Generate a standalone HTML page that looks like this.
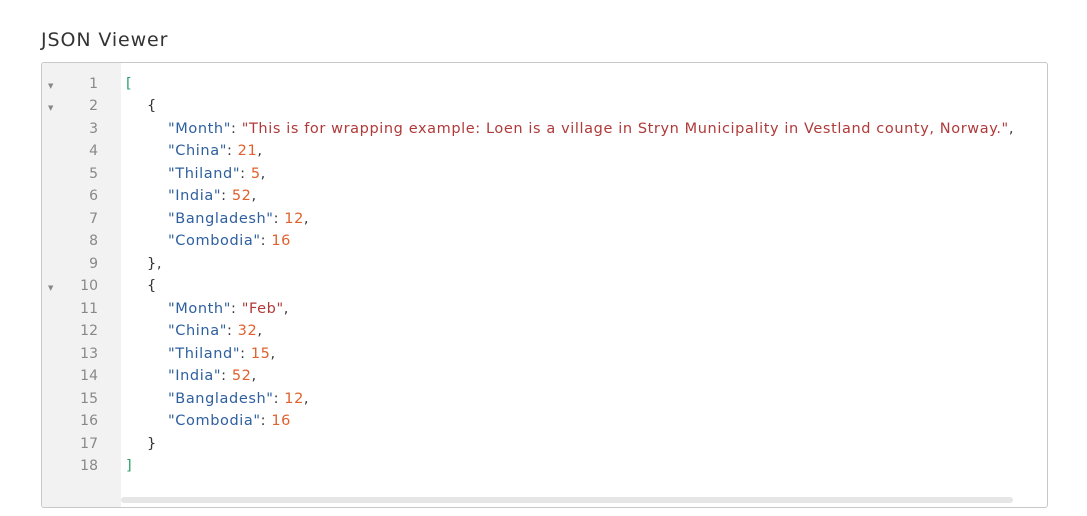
<!DOCTYPE html>
<html><head><style>
body{margin:0;background:#fff;font-family:"DejaVu Sans","Liberation Sans",sans-serif;}
h1{position:absolute;left:41px;top:29px;margin:0;font-size:19px;font-weight:normal;color:#333;letter-spacing:0.9px}
.box{position:absolute;left:41px;top:62px;width:1005px;height:444px;border:1px solid #c8c8c8;border-radius:3px;overflow:hidden}
.gut{position:absolute;left:0;top:0;width:79px;height:100%;background:#f2f2f2}
.ln{position:absolute;left:0;width:56px;text-align:right;color:#888;font-size:14px}
.ar{position:absolute;left:6px;font-size:7px;color:#888}
.cd{position:absolute;left:84px;font-size:14.5px;color:#333;white-space:pre;letter-spacing:0.6px}
.k{color:#2e5f9e}.s{color:#b03a3a}.n{color:#e0612e}.b{color:#2aa06a}
.sb{position:absolute;left:79px;top:434px;width:892px;height:6px;background:#e6e6e6;border-radius:3px}
</style></head><body>
<h1>JSON Viewer</h1>
<div class="box">
<div class="gut"></div>
<div id="c"></div>
<div class="sb"></div>
</div>
<script>
var L=[
['<span class="b">[</span>',0,1],
['{',1,1],
['<span class="k">"Month"</span>: <span class="s">"This is for wrapping example: Loen is a village in Stryn Municipality in Vestland county, Norway."</span>,',2],
['<span class="k">"China"</span>: <span class="n">21</span>,',2],
['<span class="k">"Thiland"</span>: <span class="n">5</span>,',2],
['<span class="k">"India"</span>: <span class="n">52</span>,',2],
['<span class="k">"Bangladesh"</span>: <span class="n">12</span>,',2],
['<span class="k">"Combodia"</span>: <span class="n">16</span>',2],
['},',1],
['{',1,1],
['<span class="k">"Month"</span>: <span class="s">"Feb"</span>,',2],
['<span class="k">"China"</span>: <span class="n">32</span>,',2],
['<span class="k">"Thiland"</span>: <span class="n">15</span>,',2],
['<span class="k">"India"</span>: <span class="n">52</span>,',2],
['<span class="k">"Bangladesh"</span>: <span class="n">12</span>,',2],
['<span class="k">"Combodia"</span>: <span class="n">16</span>',2],
['}',1],
['<span class="b">]</span>',0]];
var h='';
L.forEach(function(l,i){var t=13+i*22.47;
h+='<div class="ln" style="top:'+t+'px">'+(i+1)+'</div>';
if(l[2])h+='<div class="ar" style="top:'+(t+6)+'px">&#9660;</div>';
h+='<div class="cd" style="top:'+t+'px;left:'+(84+l[1]*21)+'px">'+l[0]+'</div>';});
document.getElementById('c').innerHTML=h;
</script>
</body></html>
